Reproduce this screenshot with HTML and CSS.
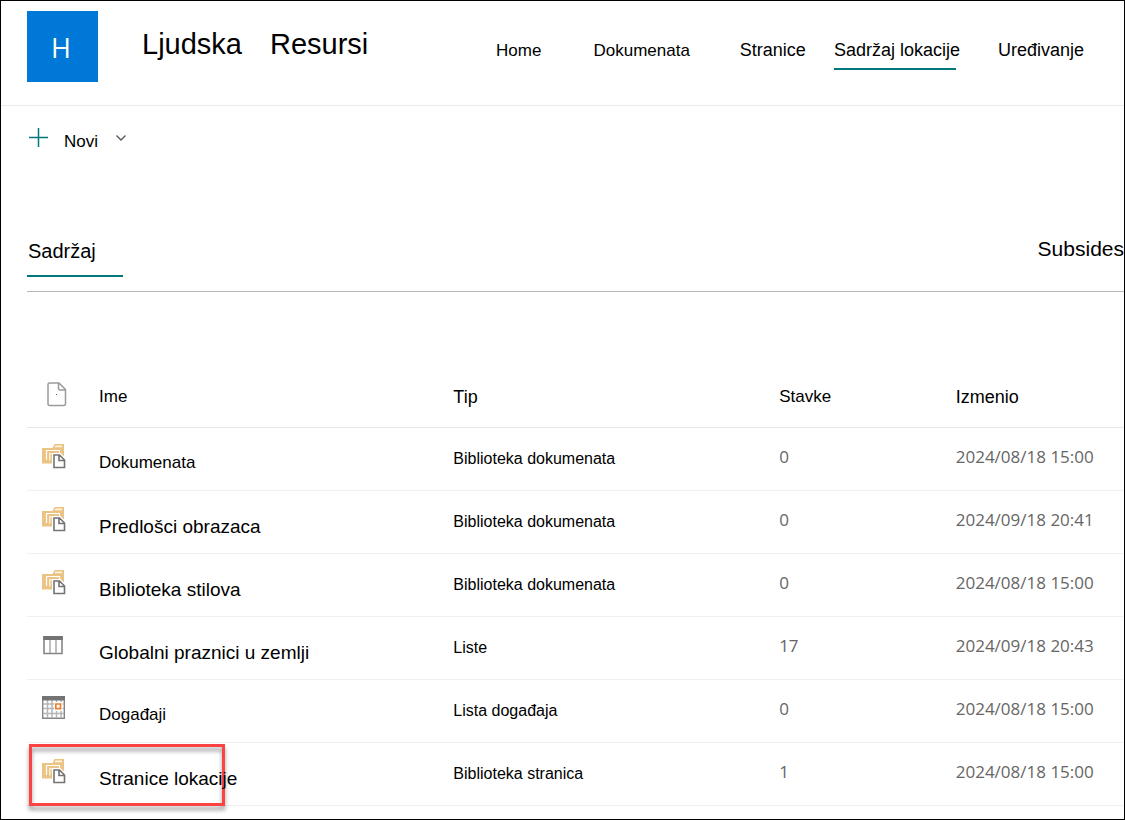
FILE: index.html
```html
<!DOCTYPE html>
<html lang="sr-Latn">
<head>
<meta charset="utf-8">
<meta name="viewport" content="width=device-width, initial-scale=1">
<title>Sadržaj lokacije</title>
<link rel="stylesheet" href="styles.css">
</head>
<body>
<svg class="sprite" aria-hidden="true">
  <symbol id="library" viewBox="0 0 24 25">
    <path d="M0 4h10.500l2-4H22v19.500H0z" fill="#ebc384"/>
    <path d="M12.500 3.200l1-1.700H20v1.700z" fill="#fdf3e2"/>
    <path d="M4.500 16V6.500h13V10" fill="none" stroke="#fff" stroke-width="1.200"/>
    <path d="M7 9h9v1.500H8.500v6H7z" fill="#fbeed6"/>
    <path d="M9.500 13h2" stroke="#fff"/>
    <path d="M10 9h8.500l5.500 5.500V25H10z" fill="#fff"/>
    <path d="M12 11h5.500l5 5v7.500H12zM17 11v5.500h5.500" fill="#fff" stroke="#737373" stroke-width="1.600"/>
  </symbol>
  <symbol id="list" viewBox="0 0 24 25">
    <path d="M2 4.500h18v16H2z" fill="#fff" stroke="#858585" stroke-width="1.600"/>
    <path d="M1.200 3h19.600v4H1.200z" fill="#737373"/>
    <path d="M8 7v13M14 7v13" stroke="#b0b0b0" stroke-width="1.600"/>
  </symbol>
  <symbol id="calendar" viewBox="0 0 24 25">
    <path d="M.700 1h21.600v21.300H.700z" fill="#fff" stroke="#858585" stroke-width="1.400"/>
    <path d="M5.500 4v18M10 4v18M14.500 4v18M19 4v18M1 8h21M1 12.500h21M1 17.500h21" stroke="#b5b5b5" stroke-width="1.500"/>
    <path d="M0 0h23v4.500H0z" fill="#737373"/>
    <path d="M12 6h8.500v9H12z" fill="#fff"/>
    <path d="M13.800 8h4.700v4.700h-4.700z" fill="#fff" stroke="#ed7d31" stroke-width="1.700"/>
  </symbol>
</svg>
<div class="page">
  <header class="site-header">
    <div class="logo">H</div>
    <h1 class="site-title"><span>Ljudska</span> <span>Resursi</span></h1>
    <nav class="site-nav">
      <a class="nav-link" href="#">Home</a>
      <a class="nav-link nav-documents" href="#">Dokumenata</a>
      <a class="nav-link nav-large nav-pages" href="#">Stranice</a>
      <a class="nav-link nav-large nav-current" href="#" aria-current="page">Sadržaj lokacije</a>
      <a class="nav-link nav-large nav-edit" href="#">Uređivanje</a>
    </nav>
  </header>

  <div class="command-bar">
    <button class="new-button" type="button">
      <svg class="plus" viewBox="0 0 20 20" aria-hidden="true"><path d="M9.500 0v19M0 9.500h19" stroke="#03787c" stroke-width="1.500"/></svg>
      <span class="new-label">Novi</span>
      <svg class="chevron" viewBox="0 0 10 6" aria-hidden="true"><path d="M.500.500L5 5 9.500.500" fill="none" stroke="#555" stroke-width="1.300"/></svg>
    </button>
  </div>

  <div class="tabs">
    <a class="tab tab-current" href="#">Sadržaj</a>
    <a class="tab tab-sites" href="#">Subsides</a>
  </div>

  <table class="contents">
    <thead>
      <tr>
        <th class="col-icon" scope="col"><svg class="file-icon" viewBox="0 0 20 25" role="img" aria-label="Ikona"><path d="M2.500 1H12l6.500 6.500V22a1.500 1.500 0 0 1-1.500 1.500H2.500A1.500 1.500 0 0 1 1 22V2.500A1.500 1.500 0 0 1 2.500 1zM11.500 1v5.500a1.500 1.500 0 0 0 1.500 1.500h5.500" fill="#fff" stroke="#9b9b9b" stroke-width="1.500"/><path d="M9 12h1v1H9z" fill="#a33"/></svg></th>
        <th class="col-name" scope="col">Ime</th>
        <th class="col-type head-large" scope="col">Tip</th>
        <th class="col-items" scope="col">Stavke</th>
        <th class="col-modified head-large" scope="col">Izmenio</th>
      </tr>
    </thead>
    <tbody>
      <tr>
        <td class="icon"><svg class="item-icon" aria-hidden="true"><use href="#library"/></svg></td>
        <td class="name"><a class="item-link item-small" href="#">Dokumenata</a></td>
        <td class="type">Biblioteka dokumenata</td><td class="meta">0</td><td class="meta">2024/08/18 15:00</td>
      </tr>
      <tr>
        <td class="icon"><svg class="item-icon" aria-hidden="true"><use href="#library"/></svg></td>
        <td class="name"><a class="item-link" href="#">Predlošci obrazaca</a></td>
        <td class="type">Biblioteka dokumenata</td><td class="meta">0</td><td class="meta">2024/09/18 20:41</td>
      </tr>
      <tr>
        <td class="icon"><svg class="item-icon" aria-hidden="true"><use href="#library"/></svg></td>
        <td class="name"><a class="item-link" href="#">Biblioteka stilova</a></td>
        <td class="type">Biblioteka dokumenata</td><td class="meta">0</td><td class="meta">2024/08/18 15:00</td>
      </tr>
      <tr>
        <td class="icon"><svg class="item-icon" aria-hidden="true"><use href="#list"/></svg></td>
        <td class="name"><a class="item-link" href="#">Globalni praznici u zemlji</a></td>
        <td class="type">Liste</td><td class="meta">17</td><td class="meta">2024/09/18 20:43</td>
      </tr>
      <tr>
        <td class="icon"><svg class="item-icon" aria-hidden="true"><use href="#calendar"/></svg></td>
        <td class="name"><a class="item-link item-small" href="#">Događaji</a></td>
        <td class="type">Lista događaja</td><td class="meta">0</td><td class="meta">2024/08/18 15:00</td>
      </tr>
      <tr>
        <td class="icon icon-marked"><svg class="item-icon" aria-hidden="true"><use href="#library"/></svg></td>
        <td class="name"><a class="item-link" href="#">Stranice lokacije</a></td>
        <td class="type">Biblioteka stranica</td><td class="meta">1</td><td class="meta">2024/08/18 15:00</td>
      </tr>
    </tbody>
  </table>
</div>
</body>
</html>
```
FILE: styles.css
```css
*, *::after { box-sizing: border-box; }

body {
  margin: 0;
  background: #fff;
  color: #000;
  font: 17px/24px "Liberation Sans", Arial, sans-serif;
}

a { color: inherit; text-decoration: none; }

.sprite { position: absolute; width: 0; height: 0; }

.page {
  min-height: 100vh;
  border: 1px solid #000;
  padding-bottom: 12px;
  overflow: hidden;
}

.site-header {
  display: flex;
  align-items: flex-start;
  padding: 10px 40px 23px 26px;
  border-bottom: 1px solid #eaeaea;
}

.logo {
  flex: none;
  width: 71px;
  height: 71px;
  background: #0078d7;
  color: #fff;
  font: 400 27px/74px "Open Sans", sans-serif;
  text-align: center;
  padding-right: 3px;
}

.site-title {
  display: flex;
  gap: 28px;
  margin: 15px 0 0 44px;
  font-size: 29px;
  font-weight: 400;
  line-height: 36px;
}

.site-nav {
  display: flex;
  align-items: baseline;
  margin: 27px 0 0 auto;
  white-space: nowrap;
}

.nav-large { font-size: 18px; }
.nav-documents { margin-left: 52px; }
.nav-pages { margin-left: 50px; }
.nav-current { position: relative; margin-left: 28px; }
.nav-edit { margin-left: 38px; }

.nav-current::after {
  content: "";
  position: absolute;
  left: 0;
  right: 4px;
  bottom: -8px;
  height: 2px;
  background: #03787c;
}

.command-bar { padding: 22px 26px 0; }

.new-button {
  display: flex;
  align-items: flex-start;
  padding: 0 2px;
  border: 0;
  background: none;
  color: inherit;
  font: inherit;
}

.plus { width: 20px; height: 20px; }
.new-label { margin: 2px 18px 0 15px; line-height: 24px; }
.chevron { width: 10px; height: 6px; margin-top: 7px; }

.tabs {
  display: flex;
  justify-content: space-between;
  align-items: flex-start;
  margin: 83px 0 0 26px;
  padding-bottom: 14px;
  border-bottom: 1px solid #b8b8b8;
}

.tab-current {
  width: 96px;
  padding: 2px 1px 12px;
  border-bottom: 2px solid #03787c;
  font-size: 20px;
}

.tab-sites { font-size: 21px; }

.contents {
  width: calc(100% - 26px);
  margin: 74px 0 0 26px;
  border-collapse: separate;
  border-spacing: 0;
  table-layout: fixed;
}

th, td {
  height: 63px;
  padding: 0;
  border-bottom: 1px solid #f0f0f0;
  text-align: left;
  vertical-align: top;
  white-space: nowrap;
}

th { height: 62px; padding-top: 19px; border-color: #e8e8e8; font-weight: 400; }

.col-icon { width: 72px; padding: 16px 0 0 20px; }
.col-name { width: 32.3%; }
.col-type { width: 29.7%; }
.col-items { width: 16.1%; }
.head-large { font-size: 18px; }

.file-icon { display: block; width: 20px; height: 25px; }

.icon { padding: 16px 0 0 15px; }
.item-icon { display: block; width: 24px; height: 25px; }

.name { padding-top: 24px; font-size: 19px; }
.item-link { position: relative; z-index: 2; }
.item-small { display: block; margin-top: -1px; font-size: 17px; }
.type { padding-top: 19px; font-size: 16px; }
.meta { padding-top: 17px; color: #666; font-family: "Open Sans", sans-serif; }

.icon-marked { position: relative; }

.icon-marked::after {
  content: "";
  position: absolute;
  z-index: 1;
  top: 1px;
  left: 2px;
  width: 196px;
  height: 62px;
  border: 3px solid #fb4343;
  filter: drop-shadow(0 4px 2px rgba(0, 0, 0, 0.4));
}
```
